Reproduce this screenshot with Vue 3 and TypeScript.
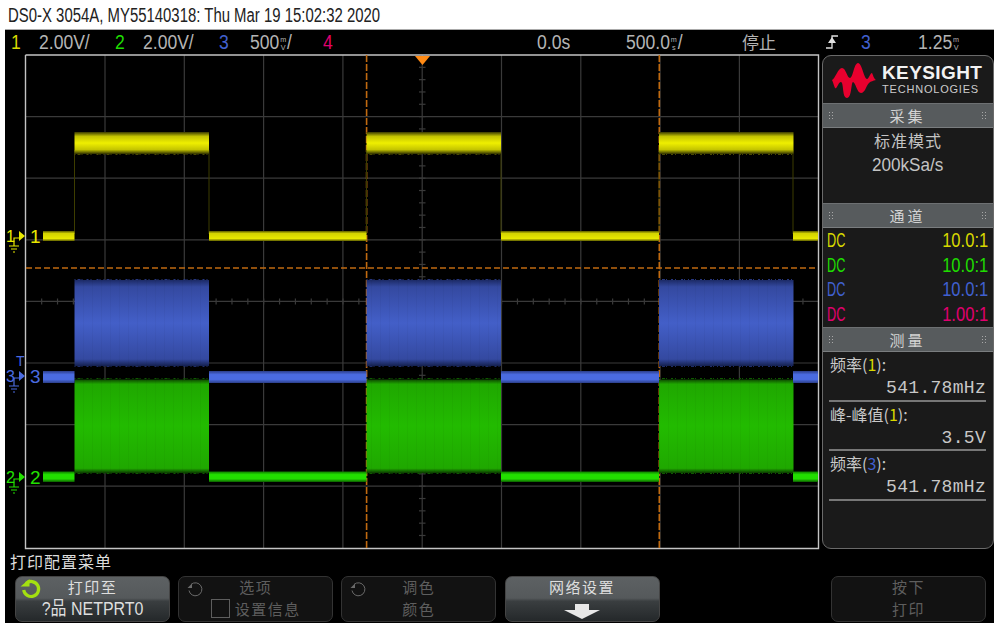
<script setup lang="ts">
interface Cell { text: string; unit?: string; suffix?: string; cls: string; width: number; cjk?: boolean }
const headerCells: Cell[] = [
  { text: '1', cls: 'yellow', width: 28 },
  { text: '2.00V/', cls: 'grey', width: 76 },
  { text: '2', cls: 'green', width: 28 },
  { text: '2.00V/', cls: 'grey', width: 76 },
  { text: '3', cls: 'blue', width: 31 },
  { text: '500', unit: 'mV', suffix: '/', cls: 'grey', width: 73 },
  { text: '4', cls: 'pink', width: 214 },
  { text: '0.0s', cls: 'grey', width: 89 },
  { text: '500.0', unit: 'ms', suffix: '/', cls: 'grey', width: 116 },
  { text: '停止', cls: 'grey', width: 86, cjk: true },
]
const columns = [105, 184.3, 263.6, 342.9, 422.2, 501.5, 580.8, 660.1, 739.4]
const rows = [116.6, 178.2, 239.8, 301.4, 363, 424.6, 486.2]
const ticksV = Array.from({ length: 39 }, (_, i) => 55 + i * 12.32 + 12.32)
const ticksH = Array.from({ length: 49 }, (_, i) => 25.8 + i * 15.86 + 15.86)
const highs = [74.5, 366.5, 659]
const lows: [number, number][] = [[43, 74.5], [209, 366.5], [501, 659], [793, 818]]
const channelRows = [
  { cls: 'yellow', ratio: '10.0:1' },
  { cls: 'green', ratio: '10.0:1' },
  { cls: 'blue', ratio: '10.0:1' },
  { cls: 'pink', ratio: '1.00:1' },
]
const measures = [
  { label: '频率', ch: '1', cls: 'yellow', value: '541.78mHz' },
  { label: '峰-峰值', ch: '1', cls: 'yellow', value: '3.5V' },
  { label: '频率', ch: '3', cls: 'blue', value: '541.78mHz' },
]
const markers = [
  { n: '1', y: 236, color: '#e8e800' },
  { n: '3', y: 376, color: '#4a6be0' },
  { n: '2', y: 477, color: '#22e000' },
]
const fuzz = '1 2 3 1 1 4 2 2 1 5 2 1 1 3'
</script>

<template>
  <div class="page">
    <div class="title"><span class="title-text">DS0-X 3054A, MY55140318: Thu Mar 19 15:02:32 2020</span></div>
    <div class="screen">
      <div class="header">
        <span v-for="(c, i) in headerCells" :key="i" class="cell" :class="[c.cls, { cjk: c.cjk }]" :style="{ width: c.width + 'px' }"><span class="squeeze">{{ c.text }}<span v-if="c.unit" class="stack">{{ c.unit[0] }}<br />{{ c.unit[1] }}</span>{{ c.suffix }}</span></span>
        <svg class="edge" width="12" height="16" viewBox="0 0 12 16">
          <path d="M0 14H6V2H12" fill="none" stroke="#e0e0e0" stroke-width="1.3" />
          <path d="M6 3L10 9H2Z" fill="#e0e0e0" />
        </svg>
        <span class="cell blue trig"><span class="squeeze">3</span></span>
        <span class="cell grey level"><span class="squeeze">1.25<span class="stack">m<br />V</span></span></span>
      </div>

      <div class="middle">
        <svg class="plot" width="816" height="496" viewBox="5 54 816 496">
          <defs>
            <linearGradient id="yw" x1="0" y1="0" x2="0" y2="1">
              <stop offset="0" stop-color="#3a3a00" />
              <stop offset=".2" stop-color="#c4c400" />
              <stop offset=".5" stop-color="#efef00" />
              <stop offset=".8" stop-color="#c4c400" />
              <stop offset="1" stop-color="#2e2e00" />
            </linearGradient>
            <linearGradient id="ywLow" x1="0" y1="0" x2="0" y2="1">
              <stop offset="0" stop-color="#5a5a00" />
              <stop offset=".25" stop-color="#d4d400" />
              <stop offset=".75" stop-color="#e8e800" />
              <stop offset="1" stop-color="#5a5a00" />
            </linearGradient>
            <linearGradient id="bl" x1="0" y1="0" x2="0" y2="1">
              <stop offset="0" stop-color="#1c2a66" />
              <stop offset=".08" stop-color="#3449a0" />
              <stop offset=".5" stop-color="#435fc8" />
              <stop offset=".92" stop-color="#3449a0" />
              <stop offset="1" stop-color="#14204e" />
            </linearGradient>
            <linearGradient id="blLow" x1="0" y1="0" x2="0" y2="1">
              <stop offset="0" stop-color="#2c3e88" />
              <stop offset=".3" stop-color="#4a6be0" />
              <stop offset=".7" stop-color="#4a6be0" />
              <stop offset="1" stop-color="#2c3e88" />
            </linearGradient>
            <linearGradient id="gr" x1="0" y1="0" x2="0" y2="1">
              <stop offset="0" stop-color="#0e4a00" />
              <stop offset=".05" stop-color="#1fa800" />
              <stop offset=".5" stop-color="#22bb00" />
              <stop offset=".95" stop-color="#1fa800" />
              <stop offset="1" stop-color="#0b3a00" />
            </linearGradient>
            <linearGradient id="grLow" x1="0" y1="0" x2="0" y2="1">
              <stop offset="0" stop-color="#0e7a00" />
              <stop offset=".3" stop-color="#22e000" />
              <stop offset=".7" stop-color="#22dd00" />
              <stop offset="1" stop-color="#0b5a00" />
            </linearGradient>
            <pattern id="stripes" width="9" height="4" patternUnits="userSpaceOnUse">
              <rect x="2" width="1" height="4" fill="#000" opacity=".03" />
            </pattern>
          </defs>

          <g stroke="#3a3a3a" stroke-width="1.2">
            <line v-for="x in columns" :key="'c' + x" :x1="x" y1="55" :x2="x" y2="548" />
            <line v-for="y in rows" :key="'r' + y" x1="26" :y1="y" x2="818" :y2="y" />
            <line v-for="y in ticksV" :key="'tv' + y" x1="419" :y1="y" x2="425.5" :y2="y" />
            <line v-for="x in ticksH" :key="'th' + x" :x1="x" y1="298.5" :x2="x" y2="304.5" />
          </g>

          <path d="M25.5 55V548.5H818.5V55H25.5" fill="none" stroke="#c4c4c4" stroke-width="1.4" />

          <line x1="26" y1="268" x2="818" y2="268" stroke="#c06a10" stroke-width="1.6" stroke-dasharray="6 3" />
          <line x1="366.6" y1="55" x2="366.6" y2="548" stroke="#c06a10" stroke-width="1.6" stroke-dasharray="7 2" />
          <line x1="659.3" y1="55" x2="659.3" y2="548" stroke="#c06a10" stroke-width="1.6" stroke-dasharray="7 2" />
          <path d="M415 56H430L422.5 65Z" fill="#ff8a14" />

          <g stroke-width="1">
            <line v-for="x in [74.5, 209, 366.5, 501, 659, 793]" :key="'ey' + x" :x1="x" y1="150" :x2="x" y2="234" stroke="#3d3d00" />
          </g>
          <template v-for="x in highs" :key="x">
            <rect :x="x" y="132" width="134.5" height="22" fill="url(#yw)" />
            <line :x1="x" y1="154.5" :x2="x + 134.5" y2="154.5" stroke="#4a4a00" :stroke-dasharray="fuzz" />
            <rect :x="x" y="280" width="134.5" height="86" fill="url(#bl)" />
            <rect :x="x" y="280" width="134.5" height="86" fill="url(#stripes)" />
            <line :x1="x" y1="279.5" :x2="x + 134.5" y2="279.5" stroke="#26367e" :stroke-dasharray="fuzz" />
            <line :x1="x" y1="366.5" :x2="x + 134.5" y2="366.5" stroke="#1e2c68" :stroke-dasharray="fuzz" />
            <rect :x="x" y="379.5" width="134.5" height="93.5" fill="url(#gr)" />
            <rect :x="x" y="379.5" width="134.5" height="93.5" fill="url(#stripes)" />
            <line :x1="x" y1="378.5" :x2="x + 134.5" y2="378.5" stroke="#0e5a00" :stroke-dasharray="fuzz" />
            <line :x1="x" y1="473.5" :x2="x + 134.5" y2="473.5" stroke="#0e5a00" :stroke-dasharray="fuzz" />
          </template>
          <template v-for="(l, i) in lows" :key="'l' + i">
            <rect :x="l[0]" y="231" :width="l[1] - l[0]" height="10" fill="url(#ywLow)" />
            <rect :x="l[0]" y="371" :width="l[1] - l[0]" height="12" fill="url(#blLow)" />
            <rect :x="l[0]" y="471.5" :width="l[1] - l[0]" height="10.5" fill="url(#grLow)" />
          </template>

          <g v-for="m in markers" :key="m.n">
            <path :d="`M19 ${m.y - 5}L25 ${m.y}L19 ${m.y + 5}Z`" :fill="m.color" />
            <path :d="`M19 ${m.y + 2}H14V${m.y + 10}M9 ${m.y + 10}H19M11 ${m.y + 13}H17M13 ${m.y + 16}H15`" fill="none" :stroke="m.color" stroke-width="1.2" />
            <text x="6" :y="m.y + 6" class="mark-text" :fill="m.color">{{ m.n }}</text>
            <text x="30" :y="m.y + 7" class="mark-num" :fill="m.color">{{ m.n }}</text>
          </g>
          <text x="16" y="366" class="mark-t" fill="#4a6be0">T</text>
        </svg>

        <aside class="side">
          <div class="brand">
            <svg width="46" height="38" viewBox="831 60 46 38">
              <path d="M832 79C835 78 838 67 842 67C846 67 847 77 850 77C853 77 854 62 858 62C862 62 864 78 867 78C869 78 870 72 872 72C873 74 874 78 876 79C873 80 871 80 869 82C866 85 865 92 861 92C857 92 856 82 853 81C851 81 852 97 847 97C842 97 844 82 841 81C838 81 837 89 835 87C834 85 833 81 832 79Z" fill="#e8002e" />
            </svg>
            <div class="brand-text">
              <div class="brand-main">KEYSIGHT</div>
              <div class="brand-sub">TECHNOLOGIES</div>
            </div>
          </div>

          <div class="bar"><i class="dots"></i><span>采集</span><i class="dots"></i></div>
          <div class="acq">
            <div class="acq-mode">标准模式</div>
            <div class="acq-rate"><span>200kSa/s</span></div>
          </div>

          <div class="bar"><i class="dots"></i><span>通道</span><i class="dots"></i></div>
          <div class="channels">
            <div v-for="(r, i) in channelRows" :key="i" class="channel" :class="r.cls"><span class="dc">DC</span><span class="ratio">{{ r.ratio }}</span></div>
          </div>

          <div class="bar"><i class="dots"></i><span>测量</span><i class="dots"></i></div>
          <div class="measures">
            <div v-for="(m, i) in measures" :key="i" class="measure">
              <div class="m-label">{{ m.label }}(<span :class="m.cls">{{ m.ch }}</span>):</div>
              <div class="m-value">{{ m.value }}</div>
            </div>
          </div>
        </aside>
      </div>

      <div class="menu-title">打印配置菜单</div>
      <div class="keys">
        <div class="key active">
          <svg class="spin" width="22" height="22" viewBox="0 0 22 22">
            <path d="M6 5.5A7.5 7.5 0 1 1 3.7 12" fill="none" stroke="#a4e010" stroke-width="3.2" />
            <path d="M0.5 8.5H9.5V1Z" fill="#a4e010" />
          </svg>
          <div class="k-top">打印至</div>
          <div class="k-bot"><span class="net">?品 NETPRT0</span></div>
        </div>
        <div class="key">
          <svg class="spin" width="18" height="18" viewBox="0 0 18 18">
            <path d="M5 3.5A6.5 6.5 0 1 1 3 9.5" fill="none" stroke="#6a6a6a" stroke-width="1" />
            <path d="M1.5 7H6V2.5Z" fill="#6a6a6a" />
          </svg>
          <div class="k-top">选项</div>
          <div class="k-bot"><i class="check"></i>设置信息</div>
        </div>
        <div class="key">
          <svg class="spin" width="18" height="18" viewBox="0 0 18 18">
            <path d="M5 3.5A6.5 6.5 0 1 1 3 9.5" fill="none" stroke="#6a6a6a" stroke-width="1" />
            <path d="M1.5 7H6V2.5Z" fill="#6a6a6a" />
          </svg>
          <div class="k-top">调色</div>
          <div class="k-bot">颜色</div>
        </div>
        <div class="key bright">
          <div class="k-top">网络设置</div>
          <svg class="arrow" width="38" height="16" viewBox="0 0 38 16">
            <path d="M12 0H26V6H37L19 15L1 6H12Z" fill="#e8e8e8" />
          </svg>
        </div>
        <div class="key-empty"></div>
        <div class="key">
          <div class="k-top">按下</div>
          <div class="k-bot">打印</div>
        </div>
      </div>
    </div>
  </div>
</template>

<style>
html, body { margin: 0; background: #fff; }
</style>

<style scoped>
.page {
  width: 999px;
  height: 633px;
  background: #fff;
  box-sizing: border-box;
  padding: 0 5px;
  overflow: hidden;
  font-family: "Liberation Sans", "Noto Sans CJK SC", sans-serif;
}
.title {
  height: 29px;
  line-height: 30px;
  padding-left: 3px;
  font-size: 19.5px;
  color: #222;
  white-space: nowrap;
}
.title-text {
  display: inline-block;
  transform: scaleX(.765);
  transform-origin: left center;
}
.screen {
  width: 989px;
  height: 594px;
  background: #000;
  border-top: 1px solid #aaa;
  box-sizing: border-box;
}
.header {
  height: 24px;
  display: flex;
  align-items: center;
  padding-left: 6px;
  font-size: 19.5px;
  white-space: nowrap;
}
.cell { display: inline-block; line-height: 24px; }
.squeeze {
  display: inline-block;
  transform: scaleX(.9);
  transform-origin: left center;
}
.cjk { font-size: 17px; font-family: "Noto Sans CJK SC", sans-serif; letter-spacing: 0; }
.cjk .squeeze { transform: none; }
.grey { color: #b4b4b4; }
.yellow { color: #d8d800; }
.green { color: #1fdc00; }
.blue { color: #4060d0; }
.pink { color: #e0006e; }
.stack {
  display: inline-block;
  font-size: 8px;
  line-height: 8px;
  vertical-align: middle;
  text-align: center;
  margin: 0 1px;
}
.edge { flex: none; margin-left: -2px; }
.trig { width: 57px; margin-left: 23px; }
.level { width: 60px; }
.middle {
  display: flex;
  height: 496px;
}
.plot { display: block; flex: none; }
.mark-text { font-size: 16px; }
.mark-num { font-size: 19px; }
.mark-t { font-size: 14px; }
.side {
  width: 172px;
  height: 494px;
  margin: 1px 0 0 1px;
  box-sizing: border-box;
  background: #1a1a1a;
  border: 1px solid #6a6a6a;
  border-radius: 9px;
  display: flex;
  flex-direction: column;
  overflow: hidden;
  flex: none;
}
.brand {
  height: 47px;
  display: flex;
  align-items: center;
  gap: 5px;
  padding-left: 8px;
  box-sizing: border-box;
  flex: none;
}
.brand-text { font-family: "Liberation Sans", sans-serif; color: #f2f2f2; }
.brand-main { font-size: 19px; font-weight: 700; line-height: 20px; letter-spacing: .4px; }
.brand-sub { font-size: 11px; line-height: 13px; color: #ccc; letter-spacing: .8px; }
.bar {
  height: 25px;
  flex: none;
  box-sizing: border-box;
  background: #575b5d;
  border-top: 1px solid #6d7072;
  border-bottom: 1px solid #7a7d7f;
  display: flex;
  align-items: center;
  justify-content: space-between;
  padding: 0 6px 0 5px;
  color: #d4d4d4;
  font-size: 15px;
  letter-spacing: 3px;
  font-family: "Noto Sans CJK SC", sans-serif;
}
.dots {
  width: 6px;
  height: 9px;
  background-image: radial-gradient(circle, #a8a8a8 0 .8px, transparent 1px);
  background-size: 3px 3px;
}
.acq {
  height: 75px;
  flex: none;
  box-sizing: border-box;
  text-align: center;
  color: #c4c4c4;
  line-height: 24px;
}
.acq-mode { font-family: "Noto Sans CJK SC", sans-serif; font-size: 16px; letter-spacing: 1px; }
.acq-rate { font-size: 19px; margin-top: 1px; }
.acq-rate span { display: inline-block; transform: scaleX(.9); }
.channels {
  height: 99px;
  flex: none;
  box-sizing: border-box;
  padding: 0 5px 0 4px;
}
.channel {
  display: flex;
  justify-content: space-between;
  height: 24.6px;
  line-height: 24px;
  font-size: 19.5px;
}
.dc { display: inline-block; transform: scaleX(.65); transform-origin: left center; }
.ratio { display: inline-block; transform: scaleX(.85); transform-origin: right center; }
.measures { padding: 0 7px 0 6px; color: #c8c8c8; }
.measure {
  height: 49.5px;
  box-sizing: border-box;
  border-bottom: 2px solid #777;
}
.m-label { height: 25px; line-height: 24px; padding-left: 1px; font-family: "Noto Sans CJK SC", sans-serif; font-size: 16px; }
.m-value {
  text-align: right;
  line-height: 22px;
  font-family: "Liberation Mono", monospace;
  font-size: 18px;
  letter-spacing: .3px;
}
.menu-title {
  height: 26px;
  line-height: 22px;
  padding-left: 5px;
  color: #dcdcdc;
  font-size: 16px;
  letter-spacing: 1px;
  font-family: "Noto Sans CJK SC", sans-serif;
}
.keys {
  display: grid;
  grid-template-columns: repeat(6, 155px);
  column-gap: 8.2px;
  padding-left: 10px;
}
.key-empty { height: 46px; }
.key {
  position: relative;
  height: 46px;
  box-sizing: border-box;
  border: 1px solid #333;
  border-radius: 7px;
  background: #121212;
  text-align: center;
  color: #5e5e5e;
  font-size: 15px;
  letter-spacing: 1.5px;
  font-family: "Noto Sans CJK SC", sans-serif;
}
.active, .bright {
  color: #dedede;
  border-color: #444;
  background: linear-gradient(#5d6163 0, #55595b 48%, #3a3e40 55%, #24282a 100%);
}
.k-top { height: 21px; line-height: 19px; }
.k-bot { height: 23px; line-height: 21px; display: flex; justify-content: center; align-items: center; padding-bottom: 3px; box-sizing: border-box; }
.net {
  display: inline-block;
  font-family: "Liberation Sans", "Noto Sans CJK SC", sans-serif;
  font-size: 19px;
  letter-spacing: 0;
  transform: scaleX(.84);
}
.check {
  width: 17px;
  height: 17px;
  border: 1px solid #5e5e5e;
  margin-right: 5px;
  flex: none;
}
.spin { position: absolute; left: 7px; top: 4px; }
.active .spin { left: 4px; top: 1px; }
.arrow { display: block; margin: 6px auto 0; }
</style>
